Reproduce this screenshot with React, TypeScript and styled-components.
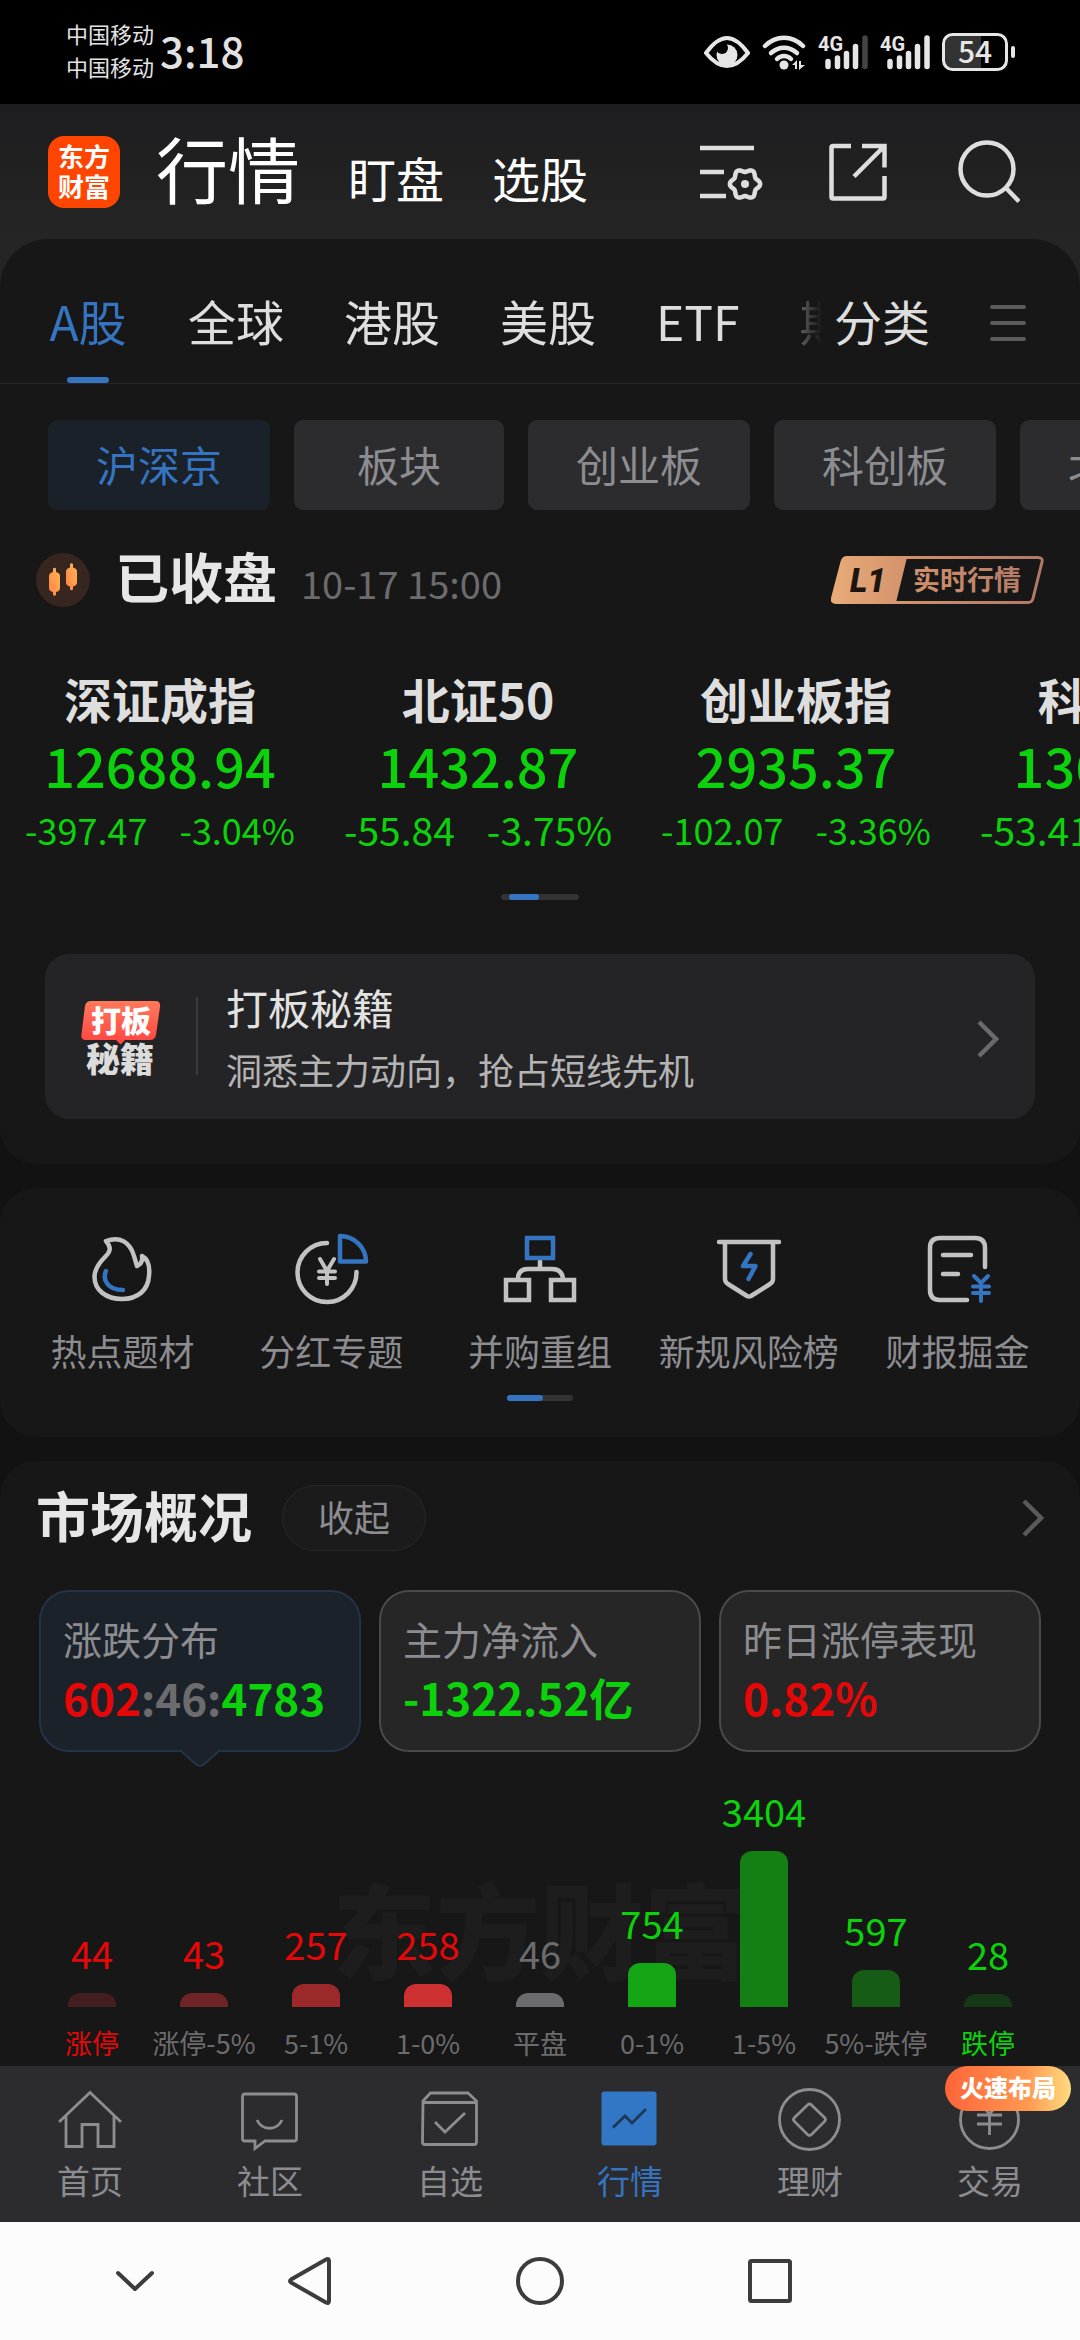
import { useState } from "react";
import type { ReactNode } from "react";
import styled, { createGlobalStyle, css } from "styled-components";

const blue = "#3474c0";
const green = "#0cd20c";
const red = "#e60808";
const grey = "#8c8c91";

const topTabs = ["A股", "全球", "港股", "美股", "ETF", "期货"];

const boards = ["沪深京", "板块", "创业板", "科创板", "北交所"];

const indexes = [
  { name: "深证成指", value: "12688.94", diff: "-397.47", rate: "-3.04%" },
  { name: "北证50", value: "1432.87", diff: "-55.84", rate: "-3.75%", large: true },
  { name: "创业板指", value: "2935.37", diff: "-102.07", rate: "-3.36%" },
  { name: "科创50", value: "1362.33", diff: "-53.41", rate: "-3.77%", large: true },
];

const distribution = [
  { label: "涨停", count: 44, height: 14, bar: "#441d1e", color: red, labelColor: red },
  { label: "涨停-5%", count: 43, height: 14, bar: "#6f2526", color: red },
  { label: "5-1%", count: 257, height: 23, bar: "#9c2929", color: red },
  { label: "1-0%", count: 258, height: 23, bar: "#cc3030", color: red },
  { label: "平盘", count: 46, height: 14, bar: "#6c6c6e", color: "#6c6c6e" },
  { label: "0-1%", count: 754, height: 44, bar: "#14a514", color: green },
  { label: "1-5%", count: 3404, height: 156, bar: "#148014", color: green },
  { label: "5%-跌停", count: 597, height: 37, bar: "#165c16", color: green },
  { label: "跌停", count: 28, height: 13, bar: "#163816", color: green, labelColor: green },
];

// closed wavy outline with six lobes
const gearPath = (cx: number, cy: number, r: number, depth: number) => {
  const points: string[] = [];
  for (let deg = 0; deg < 360; deg += 6) {
    const a = (deg * Math.PI) / 180;
    const radius = r + depth * Math.cos(6 * a);
    points.push(
      `${(cx + radius * Math.cos(a)).toFixed(2)} ${(cy + radius * Math.sin(a)).toFixed(2)}`
    );
  }
  return `M${points.join("L")}Z`;
};

const EyeIcon = () => (
  <svg width="46" height="36" viewBox="0 0 46 36" fill="none">
    <path
      d="M2 19C10 8 17 4 23 4s13 4 21 15C36 29 29 32 23 32S10 29 2 19Z"
      stroke="#e6e6e6"
      strokeWidth="4"
      strokeLinejoin="round"
    />
    <circle cx="23" cy="21" r="10.5" fill="#e6e6e6" />
    <circle cx="18" cy="14" r="6" fill="#000" />
  </svg>
);

const WifiIcon = () => (
  <svg width="44" height="36" viewBox="0 0 44 36" fill="none">
    <g stroke="#e6e6e6" strokeWidth="4.5" strokeLinecap="round">
      <path d="M3 12C14 1 30 1 41 12" />
      <path d="M9 19c8-7 18-7 26 0" />
      <path d="M15 25c4-4 10-4 14 0" />
    </g>
    <circle cx="22" cy="31" r="4.5" fill="#e6e6e6" />
    <path d="M30 31l5-5v9h-2v-4zM37 27h2v4h4l-6 5z" fill="#e6e6e6" />
  </svg>
);

const SignalIcon = ({ full }: { full?: boolean }) => (
  <svg width="50" height="36" viewBox="0 0 50 36" overflow="visible">
    <text
      x="0"
      y="17"
      fill="#e6e6e6"
      fontSize="20"
      fontWeight="700"
      fontFamily="Roboto, sans-serif"
    >
      4G
    </text>
    <g stroke="#e6e6e6" strokeWidth="5.5" strokeLinecap="round">
      <path d="M10 27.500v5M19.500 24v8.500M28.500 19.500v13M37.500 12.500v20" />
      <path d="M47 4v28.500" stroke={full ? "#e6e6e6" : "#444"} />
    </g>
  </svg>
);

const BatteryIcon = () => (
  <svg width="74" height="38" viewBox="0 0 74 38">
    <path d="M3 10Q3 3 10 3H39V35H10Q3 35 3 28Z" fill="#333" />
    <rect x="1.500" y="1.500" width="63" height="35" rx="9" fill="none" stroke="#e6e6e6" strokeWidth="3" />
    <rect x="69" y="13" width="4" height="12" rx="2" fill="#e6e6e6" />
    <text x="33" y="30" fill="#e6e6e6" fontSize="30" fontWeight="500" textAnchor="middle">
      54
    </text>
  </svg>
);

const ListSettingIcon = () => (
  <svg width="64" height="64" viewBox="0 0 64 64" fill="none" stroke="#dedede" strokeWidth="4.500">
    <path d="M0 8h54M0 32h24M0 56h26" />
    <path d={gearPath(45, 44, 13.6, 1.6)} strokeLinejoin="round" />
    <circle cx="45" cy="44" r="4" fill="#dedede" stroke="none" />
  </svg>
);

const ShareIcon = () => (
  <svg width="64" height="64" viewBox="0 0 64 64" fill="none" stroke="#dedede" strokeWidth="4.500">
    <path d="M23 6H5Q3.500 6 3.500 7.500V57Q3.500 58.500 5 58.500H55Q56.500 58.500 56.500 57V36" />
    <path d="M34 6H56.500V27.500M56.500 6 26 36.500" />
  </svg>
);

const SearchIcon = () => (
  <svg width="64" height="64" viewBox="0 0 64 64" fill="none" stroke="#dedede" strokeWidth="4.500">
    <circle cx="31" cy="29" r="26.500" />
    <path d="M50 48 63 61.500" />
  </svg>
);

const MenuIcon = () => (
  <svg width="36" height="36" viewBox="0 0 36 36" stroke="#5c5c5c" strokeWidth="4" strokeLinecap="round">
    <path d="M2 2h32M2 18h32M2 34h32" />
  </svg>
);

const CandleIcon = () => (
  <svg width="54" height="54" viewBox="0 0 54 54">
    <defs>
      <linearGradient id="candle" x1="0" y1="1" x2="1" y2="0">
        <stop offset="0" stopColor="#ff8040" />
        <stop offset="1" stopColor="#ffb858" />
      </linearGradient>
    </defs>
    <circle cx="27" cy="27" r="27" fill="#36261f" />
    <g fill="url(#candle)">
      <path d="M17 15.500q1.500-1.500 3 0V19q4 1 4 4v12q0 3-4 4v3q-1.500 1.500-3 0v-3q-4-1-4-4V23q0-3 4-4z" />
      <path d="M34 11q1.500-1.500 3 0v3.500q4 1 4 4v11q0 3-4 4v3q-1.500 1.500-3 0v-3q-4-1-4-4v-11q0-3 4-4z" />
    </g>
  </svg>
);

const LevelBadge = () => (
  <svg width="213" height="48" viewBox="0 0 213 48">
    <defs>
      <linearGradient id="level" x1="0" y1="0" x2="213" y2="0" gradientUnits="userSpaceOnUse">
        <stop offset="0" stopColor="#e8ab78" />
        <stop offset="0.4" stopColor="#d0906c" />
        <stop offset="1" stopColor="#b07868" />
      </linearGradient>
    </defs>
    <path
      d="M16 1.500H207Q212 1.500 211 6L202 42.500Q201 46.500 197 46.500H5Q.5 46.500 1.500 42L11 6Q12 1.500 16 1.500Z"
      fill="none"
      stroke="url(#level)"
      strokeWidth="3"
    />
    <path d="M16 1.500H76L65 46.500H5Q.5 46.500 1.500 42L11 6Q12 1.500 16 1.500Z" fill="url(#level)" />
    <text
      x="19"
      y="36"
      fill="#1c1410"
      fontSize="33"
      fontWeight="900"
      fontStyle="italic"
      fontFamily="Roboto, sans-serif"
    >
      L1
    </text>
    <text x="82" y="34" fill="url(#level)" fontSize="27" fontWeight="700">
      实时行情
    </text>
  </svg>
);

const PromoLogo = () => (
  <svg width="80" height="76" viewBox="0 0 80 76">
    <defs>
      <linearGradient id="promo" x1="0" y1="0" x2="0" y2="1">
        <stop offset="0" stopColor="#ff7a5c" />
        <stop offset="1" stopColor="#ff4340" />
      </linearGradient>
    </defs>
    <path
      d="M10 0H74Q80 0 79 6L75 34Q74 39 69 39H44L39.500 43.500 35 39H5Q-.5 39 .5 33L4 5Q5 0 10 0Z"
      fill="url(#promo)"
    />
    <text x="40" y="31" fill="#fff" fontSize="30" fontWeight="900" textAnchor="middle">
      打板
    </text>
    <text x="39" y="71" fill="#dcdcdc" fontSize="34" fontWeight="900" textAnchor="middle">
      秘籍
    </text>
  </svg>
);

const ChevronIcon = ({ color }: { color: string }) => (
  <svg width="24" height="38" viewBox="0 0 24 38" fill="none" stroke={color} strokeWidth="4.500">
    <path d="M4 2 21 19 4 36" />
  </svg>
);

const ToolIcon = ({ children }: { children: ReactNode }) => (
  <svg
    width="72"
    height="72"
    viewBox="0 0 72 72"
    fill="none"
    stroke="#c2c2c2"
    strokeWidth="4.500"
    strokeLinecap="round"
    strokeLinejoin="round"
    overflow="visible"
  >
    {children}
  </svg>
);

const tools = [
  {
    label: "热点题材",
    icon: (
      <ToolIcon>
        <path d="M20 8C34 3 44 9 48 23L51 33C55 31 57 28 56 23 62 26 64 34 63 43 62 57 52 66 36 66 20 66 8.500 57 8.500 44 8.500 36 13 30 19 24 24 19 26 15 20 8Z" />
        <path d="M20 38C16 47 22 57 37 57" stroke={blue} />
      </ToolIcon>
    ),
  },
  {
    label: "分红专题",
    icon: (
      <ToolIcon>
        <path d="M32 10A29.500 29.500 0 1 0 61.500 39" />
        <path d="M25 26 32 38 39 26M32 38V51M24 38.500H40M24 45H40" strokeWidth="4" />
        <path d="M45 3V28.500H71A26 26 0 0 0 45 3Z" stroke={blue} />
      </ToolIcon>
    ),
  },
  {
    label: "并购重组",
    icon: (
      <ToolIcon>
        <path d="M36 28V36M14 46Q14 36 24 36H48Q58 36 59 46" />
        <path d="M2 47H25V67H2ZM47 47H70V67H47Z" strokeLinejoin="miter" />
        <path d="M23 5H49V25H23Z" stroke={blue} strokeLinejoin="miter" />
      </ToolIcon>
    ),
  },
  {
    label: "新规风险榜",
    icon: (
      <ToolIcon>
        <path d="M6 9H66M12 10V46Q12 49 15 51L34 63Q36 64 38 63L57 51Q60 49 60 46V10" />
        <path d="M37.500 21 30 33H42.500L35.500 46" stroke={blue} />
      </ToolIcon>
    ),
  },
  {
    label: "财报掘金",
    icon: (
      <ToolIcon>
        <path d="M45 67H18Q8 67 8 57V15Q8 5 18 5H53Q63 5 63 15V34M21 22H49M21 41H36" />
        <path d="M52 43 59 50 66 43M59 50V68M51 53.500H67M51 60H67" stroke={blue} strokeWidth="4" />
      </ToolIcon>
    ),
  },
];

const NavIcon = ({ children }: { children: ReactNode }) => (
  <svg width="64" height="64" viewBox="0 0 64 64" fill="none" stroke={grey} strokeWidth="2.800">
    {children}
  </svg>
);

const navItems = [
  {
    label: "首页",
    icon: (
      <NavIcon>
        <path d="M1 34 32 4.500 63 34M8 28V58.500H24V36.500H40V58.500H56V28" />
      </NavIcon>
    ),
  },
  {
    label: "社区",
    icon: (
      <NavIcon>
        <path d="M7 6H56Q58.500 6 58.500 8.500V51Q58.500 53 56 53H27L17 60.500V53H7Q4.500 53 4.500 51V8.500Q4.500 6 7 6Z" />
        <path d="M19 32C24 43 39 43 44 32" />
      </NavIcon>
    ),
  },
  {
    label: "自选",
    icon: (
      <NavIcon>
        <path d="M5 13 12.500 5H50L58.500 13V54Q58.500 56.500 56 56.500H7Q4.500 56.500 4.500 54ZM5 14.500H58" />
        <path d="M17 34 27 44 47 25" />
      </NavIcon>
    ),
  },
  {
    label: "行情",
    icon: (
      <NavIcon>
        <rect x="3.500" y="3.500" width="55" height="54" rx="3" fill="#3276c6" stroke="none" />
        <path d="M15 39.500 27 28 34 35 48 21" stroke="#1f3854" />
      </NavIcon>
    ),
  },
  {
    label: "理财",
    icon: (
      <NavIcon>
        <circle cx="31.500" cy="31.500" r="30" />
        <path d="M29.500 17Q31.500 15 33.500 17L46.500 29.500Q48.500 31.500 46.500 33.500L33.500 46.500Q31.500 48.500 29.500 46.500L16.500 33.500Q14.500 31.500 16.500 29.500Z" />
      </NavIcon>
    ),
  },
  {
    label: "交易",
    tip: "火速布局",
    icon: (
      <NavIcon>
        <circle cx="31.500" cy="31.500" r="29" />
        <path d="M20 13 31.500 26 43 13M31.500 26V47M19 27H44M19 36H44" />
      </NavIcon>
    ),
  },
];

const SystemIcon = ({ children }: { children: ReactNode }) => (
  <svg
    width="50"
    height="50"
    viewBox="0 0 50 50"
    fill="none"
    stroke="#3c3c3c"
    strokeWidth="4"
    strokeLinecap="round"
    strokeLinejoin="round"
  >
    {children}
  </svg>
);

const App = () => {
  const [tab, setTab] = useState("A股");
  const [board, setBoard] = useState("沪深京");
  const [page, setPage] = useState("行情");

  return (
    <Screen>
      <GlobalStyle />
      <StatusBar>
        <Carriers>
          <span>中国移动</span>
          <span>中国移动</span>
        </Carriers>
        <Clock>3:18</Clock>
        <StatusIcons>
          <EyeIcon />
          <WifiIcon />
          <SignalIcon />
          <SignalIcon full />
          <BatteryIcon />
        </StatusIcons>
      </StatusBar>

      <Top>
        <Header>
          <Logo>
            <span>东方</span>
            <span>财富</span>
          </Logo>
          <Sections>
            <SectionTitle>行情</SectionTitle>
            <SectionLink href="#watch">盯盘</SectionLink>
            <SectionLink href="#pick">选股</SectionLink>
          </Sections>
          <HeaderActions>
            <IconButton aria-label="设置">
              <ListSettingIcon />
            </IconButton>
            <IconButton aria-label="分享">
              <ShareIcon />
            </IconButton>
            <IconButton aria-label="搜索">
              <SearchIcon />
            </IconButton>
          </HeaderActions>
        </Header>

        <MarketPanel>
          <TabRow>
            <TabScroller>
              {topTabs.map((name) => (
                <Tab key={name} $active={name === tab} onClick={() => setTab(name)}>
                  {name}
                </Tab>
              ))}
            </TabScroller>
            <CategoryTab>分类</CategoryTab>
            <MenuButton aria-label="菜单">
              <MenuIcon />
            </MenuButton>
          </TabRow>

          <Chips>
            {boards.map((name) => (
              <Chip key={name} $active={name === board} onClick={() => setBoard(name)}>
                {name}
              </Chip>
            ))}
          </Chips>

          <SessionRow>
            <CandleIcon />
            <SessionText>
              <Heading>已收盘</Heading>
              <SessionTime>10-17 15:00</SessionTime>
            </SessionText>
            <IconButton aria-label="L1 实时行情">
              <LevelBadge />
            </IconButton>
          </SessionRow>

          <IndexList>
            {indexes.map((item) => (
              <IndexItem key={item.name}>
                <IndexName>{item.name}</IndexName>
                <IndexValue>{item.value}</IndexValue>
                <IndexChange $large={item.large}>
                  <span>{item.diff}</span>
                  <span>{item.rate}</span>
                </IndexChange>
              </IndexItem>
            ))}
          </IndexList>
          <Pager $width={78} $start={8} $thumb={30} $top={38} />

          <Promo href="#promo">
            <PromoLogo />
            <PromoText>
              <PromoTitle>打板秘籍</PromoTitle>
              <PromoNote>洞悉主力动向，抢占短线先机</PromoNote>
            </PromoText>
            <ChevronIcon color="#6a6a6c" />
          </Promo>
        </MarketPanel>
      </Top>

      <ToolPanel>
        <Tools>
          {tools.map((tool) => (
            <Tool key={tool.label}>
              {tool.icon}
              <span>{tool.label}</span>
            </Tool>
          ))}
        </Tools>
        <Pager $width={66} $start={0} $thumb={36} $top={18} />
      </ToolPanel>

      <OverviewPanel>
        <OverviewHead>
          <OverviewTitle>市场概况</OverviewTitle>
          <FoldButton>收起</FoldButton>
          <MoreLink href="#overview" aria-label="更多">
            <ChevronIcon color="#5a5a5c" />
          </MoreLink>
        </OverviewHead>

        <Cards>
          <Card $active>
            <CardLabel>涨跌分布</CardLabel>
            <CardValue>
              <Tone $color={red}>602</Tone>
              <Tone $color="#6c6c6e">:46:</Tone>
              <Tone $color={green}>4783</Tone>
            </CardValue>
            <CardArrow width="42" height="18" viewBox="0 0 42 18">
              <path d="M1 0 17 14.500Q21 17.500 25 14.500L41 0" fill="#1b222a" stroke="#22344a" strokeWidth="2" />
            </CardArrow>
          </Card>
          <Card>
            <CardLabel>主力净流入</CardLabel>
            <CardValue>
              <Tone $color={green}>-1322.52亿</Tone>
            </CardValue>
          </Card>
          <Card>
            <CardLabel>昨日涨停表现</CardLabel>
            <CardValue>
              <Tone $color={red}>0.82%</Tone>
            </CardValue>
          </Card>
        </Cards>

        <Chart>
          <Watermark>东方财富</Watermark>
          {distribution.map((item) => (
            <Column key={item.label}>
              <Count $color={item.color}>{item.count}</Count>
              <Bar style={{ height: item.height, background: item.bar }} />
              <ColumnLabel $color={item.labelColor}>{item.label}</ColumnLabel>
            </Column>
          ))}
        </Chart>
      </OverviewPanel>

      <BottomNav>
        {navItems.map((item) => (
          <NavButton key={item.label} $active={item.label === page} onClick={() => setPage(item.label)}>
            {item.icon}
            <span>{item.label}</span>
            {item.tip && <NavTip>{item.tip}</NavTip>}
          </NavButton>
        ))}
      </BottomNav>

      <SystemNav>
        <IconButton aria-label="收起">
          <SystemIcon>
            <path d="M8 17 25 33 42 17" />
          </SystemIcon>
        </IconButton>
        <IconButton aria-label="返回">
          <SystemIcon>
            <path d="M41 3.500Q44 2 44 5V45Q44 48 41 46.500L6 26.500Q4 25 6 23.500Z" />
          </SystemIcon>
        </IconButton>
        <IconButton aria-label="主页">
          <SystemIcon>
            <circle cx="25" cy="25" r="22" />
          </SystemIcon>
        </IconButton>
        <IconButton aria-label="最近任务">
          <SystemIcon>
            <rect x="5" y="5" width="40" height="40" rx="1.500" />
          </SystemIcon>
        </IconButton>
      </SystemNav>
    </Screen>
  );
};

export default App;

const GlobalStyle = createGlobalStyle`
  * {
    box-sizing: border-box;
  }
  body {
    margin: 0;
    background: #121212;
    font-family: "Noto Sans CJK SC", sans-serif;
  }
  button {
    padding: 0;
    border: 0;
    background: none;
    color: inherit;
    font: inherit;
  }
  a {
    color: inherit;
    text-decoration: none;
  }
  svg {
    display: block;
    flex-shrink: 0;
  }
`;

const Screen = styled.div`
  display: flex;
  flex-direction: column;
  min-height: 100vh;
  overflow: hidden;
  color: #e2e2e2;
`;

const StatusBar = styled.div`
  display: flex;
  align-items: center;
  height: 104px;
  padding: 0 64px 0 66px;
  background: #000;
`;
const Carriers = styled.div`
  display: flex;
  flex-direction: column;
  font-size: 22px;
  line-height: 33px;
  padding-bottom: 4px;
`;
const Clock = styled.span`
  margin-left: 6px;
  padding-bottom: 4px;
  font-size: 42px;
  font-weight: 500;
  line-height: 48px;
`;
const StatusIcons = styled.div`
  display: flex;
  align-items: center;
  gap: 12px;
  margin-left: auto;
`;

const Top = styled.div`
  background: linear-gradient(
    #1d1d1f 0,
    #252525 135px,
    #252525 300px,
    #121212 300px
  );
`;
const Header = styled.header`
  display: flex;
  align-items: center;
  height: 135px;
  padding: 0 60px 0 48px;
`;
const Logo = styled.div`
  display: flex;
  flex-direction: column;
  align-items: center;
  justify-content: center;
  width: 72px;
  height: 72px;
  padding-bottom: 2px;
  border-radius: 16px;
  background: #ff4500;
  color: #fff;
  font-size: 26px;
  font-weight: 700;
  line-height: 30px;
`;
const Sections = styled.nav`
  display: flex;
  align-items: baseline;
  gap: 48px;
  margin-left: 36px;
  padding-bottom: 10px;
  color: #fff;
`;
const SectionTitle = styled.h1`
  margin: 0;
  font-size: 72px;
  font-weight: 400;
  line-height: 72px;
`;
const SectionLink = styled.a`
  font-size: 48px;
  line-height: 48px;
`;
const HeaderActions = styled.div`
  display: flex;
  gap: 64px;
  margin-left: auto;
`;
const IconButton = styled.button`
  display: flex;
`;

const MarketPanel = styled.section`
  padding-bottom: 45px;
  border-radius: 48px 48px 36px 36px;
  background: #171717;
`;
const TabRow = styled.div`
  display: flex;
  align-items: flex-start;
  padding: 51px 54px 0 48px;
  border-bottom: 1px solid #272727;
  font-size: 48px;
  line-height: 60px;
`;
const TabScroller = styled.div`
  display: flex;
  flex: 1;
  gap: 60px;
  min-width: 0;
  margin-right: 12px;
  overflow: hidden;
  mask-image: linear-gradient(to left, transparent 0, #000 60px);
`;
const Tab = styled.button<{ $active?: boolean }>`
  display: flex;
  flex-direction: column;
  align-items: center;
  gap: 27px;
  flex-shrink: 0;
  min-width: 80px;
  color: ${(props) => (props.$active ? blue : "#dedede")};

  &::after {
    content: "";
    width: 42px;
    height: 6px;
    border-radius: 3px;
    background: ${(props) => (props.$active ? blue : "transparent")};
  }
`;
const CategoryTab = styled.button`
  color: #dedede;
`;
const MenuButton = styled.button`
  display: flex;
  align-items: center;
  height: 66px;
  margin-left: 60px;
`;

const Chips = styled.div`
  display: flex;
  gap: 24px;
  padding: 36px 0 0 48px;
  overflow: hidden;
`;
const Chip = styled.button<{ $active?: boolean }>`
  flex-shrink: 0;
  min-width: 210px;
  height: 90px;
  padding: 0 48px 4px;
  border-radius: 9px;
  background: ${(props) => (props.$active ? "#1a2129" : "#2c2c2e")};
  color: ${(props) => (props.$active ? blue : grey)};
  font-size: 42px;
`;

const SessionRow = styled.div`
  display: flex;
  align-items: center;
  margin-top: 42px;
  padding: 0 36px;
`;
const SessionText = styled.div`
  display: flex;
  align-items: baseline;
  flex: 1;
  gap: 24px;
  margin-left: 25px;
  line-height: 48px;
`;
const Heading = styled.h2`
  margin: 0;
  color: #e6e6e6;
  font-size: 54px;
  font-weight: 600;
`;
const SessionTime = styled.time`
  color: #6c6c6e;
  font-size: 38px;
`;

const IndexList = styled.ul`
  display: flex;
  margin: 61px 0 0;
  padding: 0 1px;
  overflow: hidden;
  list-style: none;
`;
const IndexItem = styled.li`
  display: flex;
  flex-direction: column;
  align-items: center;
  flex: 0 0 318px;
  color: ${green};
`;
const IndexName = styled.span`
  color: #dedede;
  font-size: 48px;
  font-weight: 600;
  line-height: 60px;
`;
const IndexValue = styled.strong`
  font-size: 54px;
  font-weight: 500;
  line-height: 74px;
`;
const IndexChange = styled.div<{ $large?: boolean }>`
  display: flex;
  gap: 32px;
  font-size: ${(props) => (props.$large ? 39 : 36)}px;
  line-height: 54px;
`;

const Pager = styled.div<{ $width: number; $start: number; $thumb: number; $top: number }>`
  width: ${(props) => props.$width}px;
  height: 6px;
  margin: ${(props) => props.$top}px auto 0;
  padding-left: ${(props) => props.$start}px;
  border-radius: 3px;
  background: #333;

  &::before {
    content: "";
    display: block;
    width: ${(props) => props.$thumb}px;
    height: 6px;
    border-radius: 3px;
    background: ${blue};
  }
`;

const Promo = styled.a`
  display: flex;
  align-items: center;
  margin: 54px 45px 0;
  padding: 23px 36px 18px;
  border-radius: 24px;
  background: #242426;
`;
const PromoText = styled.div`
  position: relative;
  display: flex;
  flex: 1;
  flex-direction: column;
  margin-left: 35px;
  padding-left: 30px;

  &::before {
    content: "";
    position: absolute;
    top: 20px;
    bottom: 26px;
    left: 0;
    width: 2px;
    background: #3a3a3c;
  }
`;
const PromoTitle = styled.strong`
  font-size: 42px;
  font-weight: 400;
  line-height: 60px;
`;
const PromoNote = styled.span`
  color: #b4b4b4;
  font-size: 36px;
  line-height: 64px;
`;

const panel = css`
  margin-top: 24px;
  background: #171717;
`;
const ToolPanel = styled.section`
  ${panel}
  padding: 45px 18px 36px;
  border-radius: 36px;
`;
const Tools = styled.div`
  display: grid;
  grid-template-columns: repeat(5, 1fr);
`;
const Tool = styled.button`
  display: flex;
  flex-direction: column;
  align-items: center;
  gap: 18px;
  color: ${grey};
  font-size: 36px;
  line-height: 54px;
  white-space: nowrap;
`;

const OverviewPanel = styled.section`
  ${panel}
  padding: 24px 36px 5px;
  border-radius: 36px 36px 0 0;
`;
const OverviewHead = styled.div`
  display: flex;
  align-items: center;
`;
const OverviewTitle = styled(Heading)`
  padding-bottom: 6px;
  line-height: 60px;
`;
const FoldButton = styled.button`
  width: 144px;
  height: 66px;
  margin-left: 30px;
  padding-bottom: 4px;
  border: 1px solid #282828;
  border-radius: 33px;
  background: #1b1b1b;
  color: ${grey};
  font-size: 36px;
  line-height: 48px;
`;
const MoreLink = styled.a`
  margin-left: auto;
`;

const Cards = styled.div`
  display: grid;
  grid-template-columns: repeat(3, 1fr);
  gap: 18px;
  margin: 39px 3px 0;
`;
const Card = styled.button<{ $active?: boolean }>`
  position: relative;
  display: flex;
  flex-direction: column;
  padding: 19px 22px 21px;
  border: 2px solid ${(props) => (props.$active ? "#22344a" : "#4a4a4a")};
  border-radius: 30px;
  background: ${(props) => (props.$active ? "#1b222a" : "#262626")};
  text-align: left;
  white-space: nowrap;
`;
const CardLabel = styled.span`
  color: ${grey};
  font-size: 39px;
  line-height: 54px;
`;
const CardValue = styled.strong`
  font-size: 44px;
  font-weight: 700;
  line-height: 64px;
`;
const Tone = styled.span<{ $color: string }>`
  color: ${(props) => props.$color};
`;
const CardArrow = styled.svg`
  position: absolute;
  top: 100%;
  left: calc(50% - 21px);
`;

const Chart = styled.div`
  position: relative;
  display: grid;
  grid-template-columns: repeat(9, 1fr);
  align-items: end;
  margin-top: 35px;
`;
const Watermark = styled.span`
  position: absolute;
  right: 0;
  bottom: 74px;
  left: 0;
  color: #1d1d1d;
  font-size: 104px;
  font-weight: 900;
  line-height: 120px;
  text-align: center;
`;
const Column = styled.div`
  position: relative;
  display: flex;
  flex-direction: column;
  align-items: center;
`;
const Count = styled.span<{ $color: string }>`
  margin-bottom: 16px;
  color: ${(props) => props.$color};
  font-size: 38px;
  line-height: 48px;
`;
const Bar = styled.div`
  width: 48px;
  border-radius: 12px 12px 0 0;
`;
const ColumnLabel = styled.span<{ $color?: string }>`
  margin-top: 18px;
  color: ${(props) => props.$color || "#6c6c6e"};
  font-size: 27px;
  line-height: 36px;
  white-space: nowrap;
`;

const BottomNav = styled.nav`
  display: grid;
  grid-template-columns: repeat(6, 1fr);
  background: #2c2c2e;
`;
const NavButton = styled.button<{ $active?: boolean }>`
  position: relative;
  display: flex;
  flex-direction: column;
  align-items: center;
  gap: 4px;
  padding: 22px 0 18px;
  color: ${(props) => (props.$active ? blue : grey)};
  font-size: 33px;
  line-height: 48px;
`;
const NavTip = styled.span`
  position: absolute;
  top: 0;
  right: 9px;
  width: 126px;
  height: 45px;
  border-radius: 23px;
  background: linear-gradient(to right, #ff6438, #ff9850 65%, #ffdc80);
  color: #fff;
  font-size: 24px;
  font-weight: 900;
  line-height: 42px;
`;

const SystemNav = styled.div`
  display: grid;
  flex: 1;
  grid-template-columns: 120fr 230fr 230fr 230fr;
  align-items: center;
  justify-items: center;
  min-height: 118px;
  padding: 0 195px 0 75px;
  background: #fcfcfc;
`;
